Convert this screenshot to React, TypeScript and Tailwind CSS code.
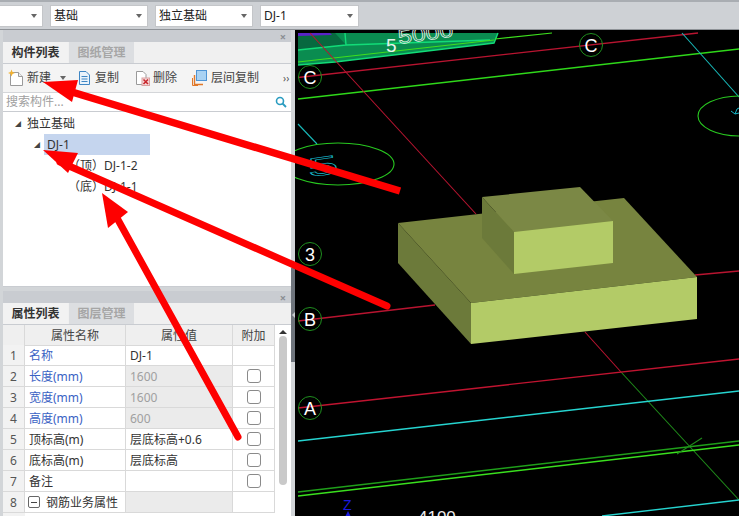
import React from "react";

const font = { fontFamily: '"Noto Sans","Noto Sans CJK SC",sans-serif' };

function Caret() {
  return <span className="block w-0 h-0 border-x-[3px] border-x-transparent border-t-[4px] border-t-[#666]" />;
}

function Drop({ w, label }: { w: string; label: string }) {
  return (
    <div className={`${w} h-[22px] bg-white border border-[#c4c6c9] flex items-center justify-between pl-[3px] pr-[5px] text-[12px] text-[#222] shrink-0`}>
      <span>{label}</span>
      <Caret />
    </div>
  );
}

function NewIcon() {
  return (
    <svg width="16" height="18" viewBox="0 0 16 18" className="shrink-0">
      <path d="M2.5 3.5H10.5L14.5 7.5V16.5H2.5Z" fill="#fff" stroke="#9a9a9a" />
      <path d="M10.5 3.5V7.5H14.5" fill="#eee" stroke="#9a9a9a" />
      <path d="M3.5 0.5L4.5 3L7 4L4.5 5L3.5 7.5L2.5 5L0 4L2.5 3Z" fill="#f2b233" />
    </svg>
  );
}
function CopyIcon() {
  return (
    <svg width="13" height="16" viewBox="0 0 13 16" className="shrink-0">
      <path d="M1.5 1.5H8L11.5 5V14.5H1.5Z" fill="#eaf3fb" stroke="#3f86c4" />
      <path d="M3.5 6.5H9.5M3.5 9H9.5M3.5 11.5H9.5" stroke="#3f86c4" />
    </svg>
  );
}
function DelIcon() {
  return (
    <svg width="15" height="16" viewBox="0 0 15 16" className="shrink-0">
      <path d="M1.5 1.5H8L11 4.5V14.5H1.5Z" fill="#fff" stroke="#9a9a9a" />
      <rect x="7" y="8" width="7.5" height="7.5" fill="#f4d6d6" stroke="#d9a0a0" />
      <path d="M8.5 9.5L13 14M13 9.5L8.5 14" stroke="#c8262c" strokeWidth="1.6" />
    </svg>
  );
}
function LayerIcon() {
  return (
    <svg width="15" height="16" viewBox="0 0 15 16" className="shrink-0">
      <path d="M2.5 5V14.5H11" fill="none" stroke="#e0782a" strokeWidth="1.4" />
      <path d="M0.5 8V15.5H6" fill="none" stroke="#e0782a" strokeWidth="1" />
      <rect x="4.5" y="0.5" width="10" height="10" fill="#a9d2f3" stroke="#4f95d6" />
    </svg>
  );
}

function PanelHead() {
  return (
    <div className="h-[12px] bg-[#c9ccd1] flex items-center justify-end pr-[5px]">
      <span className="text-[#8b8f94] text-[11px] leading-none font-bold">×</span>
    </div>
  );
}

function Tabs({ a, b }: { a: string; b: string }) {
  return (
    <div className="h-[22px] flex bg-[#f0f0f0] border-b border-[#c9ccd1] text-[12px]">
      <div className="w-[65px] flex items-center justify-center font-bold text-[#333] bg-[#f2f2f2]">{a}</div>
      <div className="w-[65px] ml-px flex items-center justify-center font-bold text-[#a6a6a6] bg-[#dcdee1]">{b}</div>
    </div>
  );
}

const rows: { n: string; name: React.ReactNode; blue?: boolean; val: string; grey?: boolean; box: boolean }[] = [
  { n: "1", name: "名称", blue: true, val: "DJ-1", box: false },
  { n: "2", name: "长度(mm)", blue: true, val: "1600", grey: true, box: true },
  { n: "3", name: "宽度(mm)", blue: true, val: "1600", grey: true, box: true },
  { n: "4", name: "高度(mm)", blue: true, val: "600", grey: true, box: true },
  { n: "5", name: "顶标高(m)", val: "层底标高+0.6", box: true },
  { n: "6", name: "底标高(m)", val: "层底标高", box: true },
  { n: "7", name: "备注", val: "", box: true },
];

const line = "border-r border-b border-[#d9d9d9]";

function Canvas() {
  const tags: [number, number, string][] = [
    [310, 77, "C"],
    [591, 45, "C"],
    [310, 254, "3"],
    [310, 319, "B"],
    [310, 408, "A"],
  ];
  return (
    <svg width="444" height="486" viewBox="295 30 444 486" className="block shrink-0 bg-black" fontFamily="Liberation Sans, sans-serif">
      <polygon points="298,33 498,33 494,43 335,62 298,65" fill="#0a8c50" />
      <polygon points="298,33 335,33 346,45 298,50" fill="#07693f" />
      <polygon points="298,33 330,33 332,35 298,36" fill="#5a23c8" />
      <path d="M298 50L346 45L490 40M345 33L346 45" stroke="#12dc78" strokeWidth="1.4" fill="none" />
      <path d="M298 65L335 62L494 43L498 33" stroke="#12dc78" strokeWidth="1.4" fill="none" />
      <path d="M298 62L494 40M495 39L552 33" stroke="#3ee01e" strokeWidth="1.2" fill="none" />
      <text x="386" y="52" fontSize="19" fill="#e8f5ee">5</text>
      <text transform="translate(399 44) rotate(-8) scale(1.25 1)" fontSize="20" fill="none" stroke="#e8f5ee" strokeWidth="0.7">5000</text>

      <path d="M298 77.5L698 33" stroke="#b81430" strokeWidth="1.4" />
      <path d="M298 99L739 49" stroke="#2fd81a" strokeWidth="1.4" />
      <path d="M310 33L476 214" stroke="#b81430" strokeWidth="1.1" />
      <path d="M585 332L621 372" stroke="#b81430" strokeWidth="1.1" />
      <path d="M621 372L739 500" stroke="#1f8a1a" strokeWidth="1.1" />
      <path d="M682 33L739 97" stroke="#18b8b8" strokeWidth="1.1" />
      <path d="M298 124L317 144" stroke="#18b8b8" strokeWidth="1.1" />
      <ellipse cx="338" cy="164" rx="56" ry="21" fill="none" stroke="#28c820" strokeWidth="1.1" />
      <ellipse cx="740" cy="116" rx="42" ry="20" fill="none" stroke="#28c820" strokeWidth="1.1" />
      <text transform="translate(309 177) rotate(-8) scale(2.1 1)" fontSize="26" fill="none" stroke="#18b8c8" strokeWidth="0.6">5</text>
      <path d="M731 111L735 114L739 113M735 114L737 109L739 108" fill="none" stroke="#18b8c8" />

      <path d="M298 321L435 305M695 275L739 271" stroke="#b81430" strokeWidth="1.4" />
      <path d="M298 408L739 359" stroke="#c01430" strokeWidth="1.4" />
      <path d="M298 441L739 391" stroke="#26d4d0" strokeWidth="1.4" />
      <path d="M298 492L739 441" stroke="#1f9f1a" strokeWidth="1.4" />
      <path d="M298 496L739 445" stroke="#3ae01e" strokeWidth="1.4" />
      <path d="M602 516L739 500" stroke="#26d4d0" strokeWidth="1.4" />
      <path d="M677 454L702 438" stroke="#1f8a1a" strokeWidth="1.1" />

      {tags.map(([x, y, t]) => (
        <g key={x + "" + y}>
          <circle cx={x} cy={y} r="11.5" fill="none" stroke="#1f8f1f" strokeWidth="1" />
          <text x={x} y={y + 6.5} fontSize="18" fill="#fff" textAnchor="middle">{t}</text>
        </g>
      ))}

      <text x="343" y="510" fontSize="14" fill="#1a1ae0">Z</text>
      <path d="M348 511L345 517H351Z" fill="#1a1ae0" />
      <text x="418" y="523" fontSize="17" fill="#eee">4100</text>

      <polygon points="398,223 624,198 697,277 471,303" fill="#77843f" />
      <polygon points="398,223 471,303 471,344 398,263" fill="#6c7a3a" />
      <polygon points="471,303 697,277 697,319 471,344" fill="#b3cb67" />
      <polygon points="482,197 580,187 613,221 514,232" fill="#7b8845" />
      <polygon points="482,197 514,232 514,274 482,238" fill="#6c7a3a" />
      <polygon points="514,232 613,221 613,263 514,274" fill="#b3cb67" />
    </svg>
  );
}

function Arrows() {
  return (
    <svg width="739" height="516" viewBox="0 0 739 516" className="absolute left-0 top-0 pointer-events-none">
      <g fill="#fe0000" stroke="none">
        <polygon points="43,82 78,80 72,102" />
        <polygon points="43,150 78,153 68,173" />
        <polygon points="102,193 128,212 108,228" />
      </g>
      <g stroke="#fe0000" fill="none">
        <path d="M400 191L62 89" strokeWidth="7.5" />
        <path d="M387 306L60 162" strokeWidth="7" strokeLinecap="round" />
        <path d="M238 437L117 218" strokeWidth="7" strokeLinecap="round" />
      </g>
    </svg>
  );
}

export default function App() {
  return (
    <div className="relative w-[739px] h-[516px] overflow-hidden flex flex-col bg-[#d2d5d8]" style={font}>
      <div className="h-[30px] shrink-0 flex items-center gap-[7px] bg-[#ced1d5] border-t-2 border-t-[#a9adb2] border-b border-b-[#8f9398]">
        <Drop w="w-[43px] border-l-0" label="" />
        <Drop w="w-[98px]" label="基础" />
        <Drop w="w-[98px]" label="独立基础" />
        <Drop w="w-[99px]" label="DJ-1" />
      </div>
      <div className="flex flex-1 min-h-0">
        <div className="w-[295px] shrink-0 flex">
          <div className="w-[288px] ml-[3px] shrink-0 flex flex-col">
            <div className="h-[257px] shrink-0 flex flex-col bg-white border-b border-[#c9ccd1]">
              <PanelHead />
              <Tabs a="构件列表" b="图纸管理" />
              <div className="h-[29px] flex items-center bg-[#f4f4f4] border-b border-[#d4d6d9] text-[12px] text-[#444] pl-[5px]">
                <NewIcon />
                <span className="ml-[3px]">新建</span>
                <span className="ml-[9px]"><Caret /></span>
                <span className="ml-[12px] flex items-center gap-[4px]"><CopyIcon />复制</span>
                <span className="ml-[16px] flex items-center gap-[3px]"><DelIcon />删除</span>
                <span className="ml-[15px] flex items-center gap-[4px]"><LayerIcon />层间复制</span>
                <span className="ml-[24px] text-[10px] leading-none text-[#555]">››</span>
              </div>
              <div className="h-[19px] flex items-center justify-between pl-[3px] pr-[4px] border-b border-[#c9ccd1] text-[12px] text-[#a0a0a0]">
                <span>搜索构件...</span>
                <svg width="12" height="12" viewBox="0 0 12 12">
                  <circle cx="5" cy="5" r="3.5" fill="none" stroke="#2a9cc0" strokeWidth="1.6" />
                  <path d="M7.5 7.5L11 11" stroke="#2a9cc0" strokeWidth="1.8" />
                </svg>
              </div>
              <div className="flex-1 text-[12px] text-[#333]">
                <div className="h-[21px] flex items-center pl-[12px] mt-px">
                  <span className="w-[12px] text-[6px] text-[#444] leading-none">◢</span>
                  <span>独立基础</span>
                </div>
                <div className="h-[21px] flex items-center pl-[31px]">
                  <span className="w-[10px] text-[6px] text-[#444] leading-none">◢</span>
                  <span className="w-[106px] h-[21px] flex items-center pl-[3px] bg-[#c5d5ee]">DJ-1</span>
                </div>
                <div className="h-[21px] flex items-center pl-[65px]">（顶）DJ-1-2</div>
                <div className="h-[21px] flex items-center pl-[65px]">（底）DJ-1-1</div>
              </div>
            </div>
            <div className="h-[4px] shrink-0" />
            <div className="flex-1 flex flex-col bg-white min-h-0 overflow-hidden">
              <PanelHead />
              <Tabs a="属性列表" b="图层管理" />
              <div className="flex text-[12px] text-[#333]">
                <div className="w-[272px] shrink-0">
                  <div className="grid grid-cols-[22px_101px_107px_42px] h-[20px] bg-[#efefef] text-[#444] text-center">
                    <div className={line} />
                    <div className={`${line} flex items-center justify-center pt-[2px]`}>属性名称</div>
                    <div className={`${line} flex items-center justify-center pt-[2px]`}>属性值</div>
                    <div className={`${line} flex items-center justify-center pt-[2px]`}>附加</div>
                  </div>
                  {rows.map((r) => (
                    <div key={r.n} className="grid grid-cols-[22px_101px_107px_42px] h-[21px]">
                      <div className={`${line} bg-[#f2f2f2] text-[#555] flex items-center justify-center pt-[2px]`}>{r.n}</div>
                      <div className={`${line} flex items-center pl-[4px] pt-[2px] ${r.blue ? "text-[#3a62c4]" : ""}`}>{r.name}</div>
                      <div className={`${line} flex items-center pl-[4px] pt-[2px] ${r.grey ? "bg-[#ebebeb] text-[#a0a0a0]" : ""}`}>{r.val}</div>
                      <div className={`${line} flex items-center justify-center`}>
                        {r.box && <span className="w-[14px] h-[14px] rounded-[3px] border border-[#8a8a8a] bg-white" />}
                      </div>
                    </div>
                  ))}
                  <div className="grid grid-cols-[22px_101px_107px_42px] h-[21px]">
                    <div className={`${line} bg-[#f2f2f2] text-[#555] flex items-center justify-center pt-[2px]`}>8</div>
                    <div className={`${line} flex items-center pl-[3px] gap-[6px] whitespace-nowrap`}>
                      <span className="w-[12px] h-[12px] rounded-[2px] border border-[#666] flex items-center justify-center">
                        <span className="w-[6px] h-px bg-[#444]" />
                      </span>
                      <span className="pt-[2px]">钢筋业务属性</span>
                    </div>
                    <div className={`${line} bg-[#ebebeb]`} />
                    <div className={line} />
                  </div>
                  <div className="grid grid-cols-[22px_101px_107px_42px] h-[3px]">
                    <div className="bg-[#f2f2f2]" />
                  </div>
                </div>
                <div className="flex-1 flex flex-col items-center pt-[5px]">
                  <span className="w-0 h-0 border-x-[4px] border-x-transparent border-b-[4px] border-b-[#333]" />
                  <span className="w-[8px] h-[149px] mt-[2px] rounded-[4px] bg-[#c9c9c9]" />
                </div>
              </div>
            </div>
          </div>
          <div className="flex-1 flex flex-col">
            <div className="h-[238px] shrink-0" />
            <div className="h-[94px] shrink-0 bg-[#6f757d] flex items-center justify-center">
              <span className="w-0 h-0 border-y-[3px] border-y-transparent border-r-[3px] border-r-[#c8ccd0]" />
            </div>
          </div>
        </div>
        <Canvas />
      </div>
      <Arrows />
    </div>
  );
}
